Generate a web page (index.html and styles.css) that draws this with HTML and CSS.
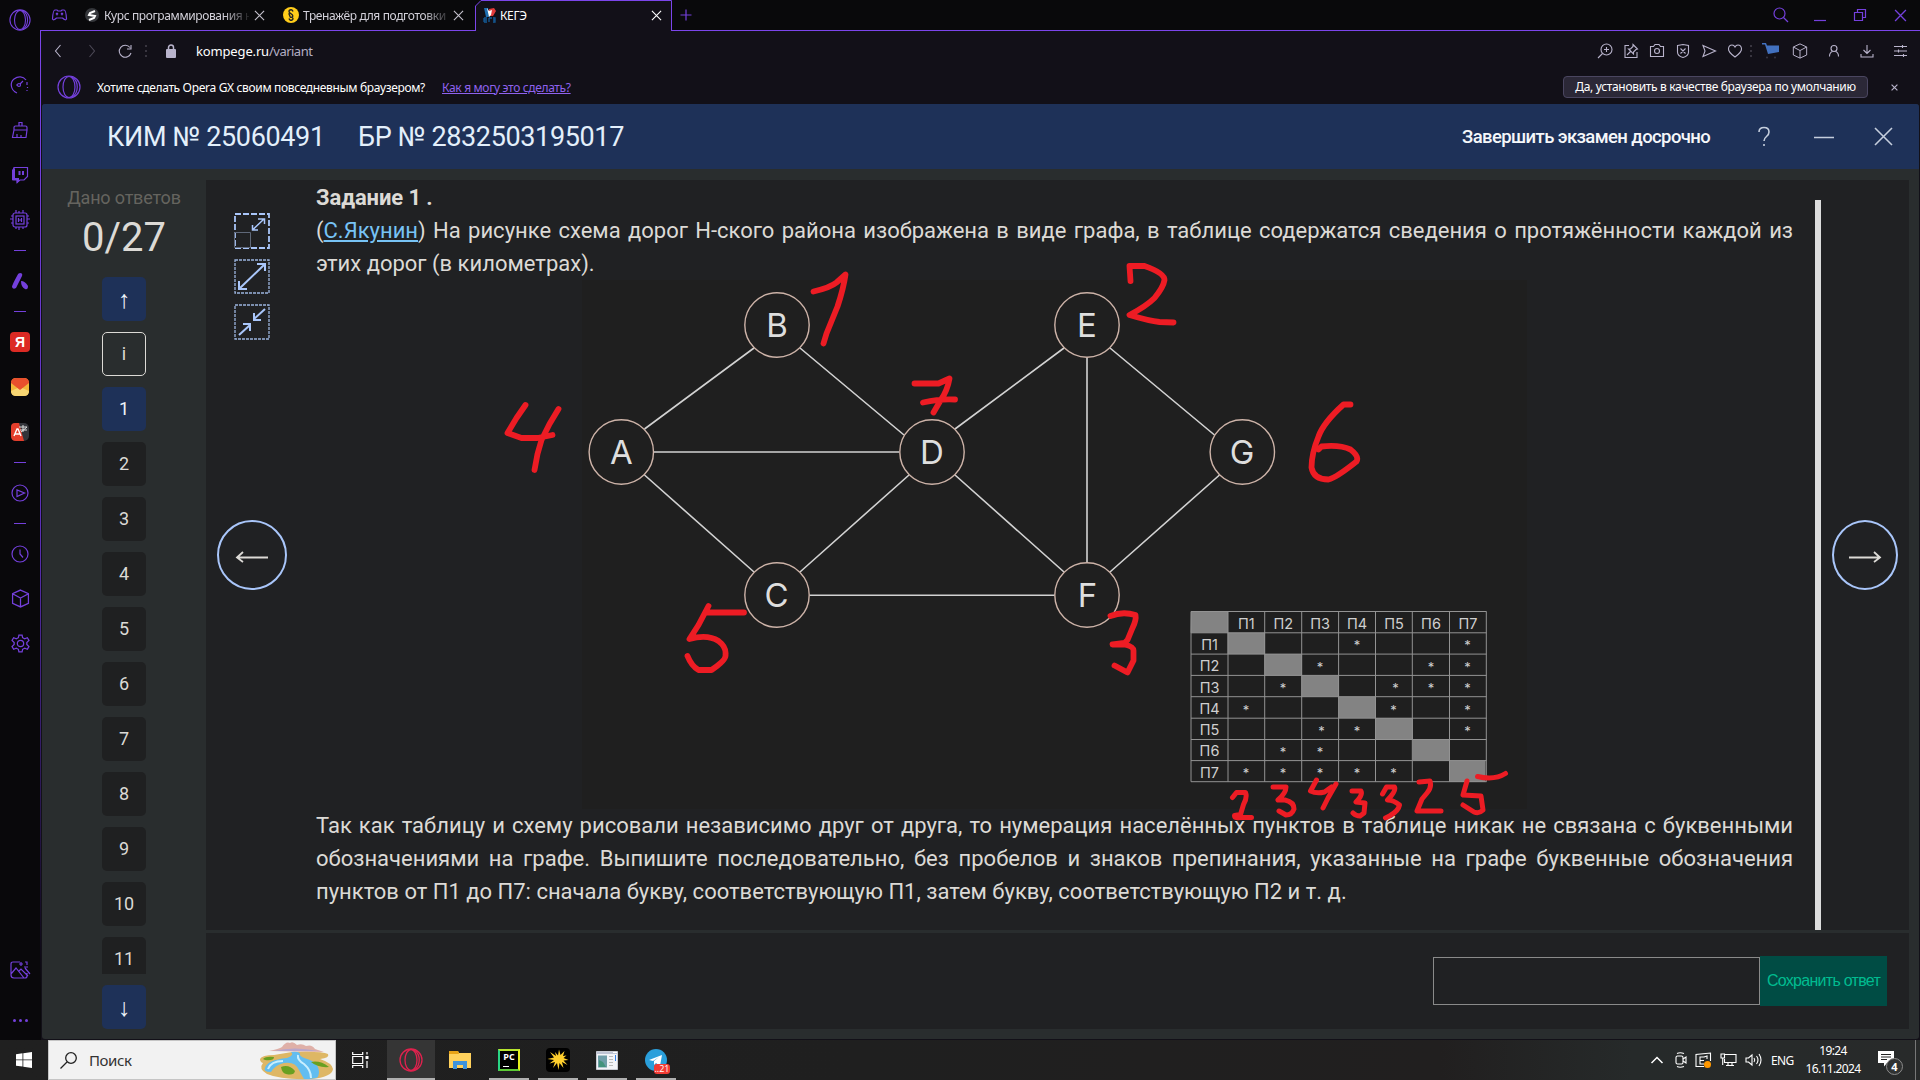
FILE: index.html
```html
<!DOCTYPE html>
<html lang="ru">
<head>
<meta charset="utf-8">
<title>КЕГЭ</title>
<link rel="stylesheet" href="styles.css">
</head>
<body>
<svg class="defs" width="0" height="0">
  <defs>
    <symbol id="opera" viewBox="0 0 24 24"><circle cx="12" cy="12" r="11"/><ellipse cx="12" cy="12" rx="6" ry="10.5"/><path d="M15 2c7 4 7 16 0 20"/></symbol>
    <symbol id="cube" viewBox="0 0 18 18"><path d="M9 1l7.5 3.5v9L9 17l-7.500-3.500v-9zM1.500 4.500L9 8.500l7.500-4M9 8.500V17"/></symbol>
    <symbol id="cross" viewBox="0 0 12 12"><path d="M1 1l10 10M11 1L1 11"/></symbol>
  </defs>
</svg>
<div class="screen">
  <div class="window">
    <aside class="rail">
      <div class="slot logo"><svg class="ic" width="22" height="22"><use href="#opera"/></svg></div>
      <div class="slot"><svg class="ic" width="20" height="18" viewBox="0 0 20 18"><path d="M7 17C0 14 0 6 4 3c4-3 9-3 12 1M17 6v3M17.500 11v1M17 14v1"/><circle cx="9" cy="9" r="1.500"/><path d="M10 8l3-3M6 9h1"/></svg></div>
      <div class="slot"><svg class="ic" width="18" height="18" viewBox="0 0 18 18"><path d="M8 5V1.500h3V5M3 9V6.500q0-1.500 1.500-1.500h10q1.500 0 1.500 1.500V9zM3 9L1.500 16.500H15L16 9M6 16v-3M10 16v-2"/></svg></div>
      <div class="slot"><svg class="ic" width="18" height="18" viewBox="0 0 18 18"><path d="M3 1.500h13.500v9L13 14H9l-3 2.500V14H2V4z"/><path class="solid" d="M1 4l3-2v10h4v3l-2 2.500V14H1z"/><path d="M8.500 5v4M12 5v4" stroke-width="2"/></svg></div>
      <div class="slot"><svg class="ic" width="20" height="20" viewBox="0 0 20 20"><rect x="3" y="3" width="14" height="14" rx="2"/><rect x="6" y="6" width="8" height="8"/><path d="M8.500 8v4M11.500 8v4M8.500 10h3M6 3V0M9 3V1M13 3V0M6 17v2M9 17v3M13 17v2M3 6H1M3 9H0M3 13H1M17 6h2M17 9h3M17 13h2"/></svg></div>
      <div class="dash"></div>
      <div class="slot"><svg class="ic" width="18" height="18" viewBox="0 0 18 18"><path class="solid" d="M9 1q3 0 2 3L5 16q-3 2-4-1Q1 13 6 4 7 1 9 1zM10 9q4 0 7 5 0 4-3 3Q10 15 10 9z"/></svg></div>
      <div class="dash"></div>
      <div class="slot"><span class="ya">Я</span></div>
      <div class="slot"><svg width="18" height="18" viewBox="0 0 18 18"><rect width="18" height="18" rx="5" fill="#f0b73a"/><path d="M0 13L9 9l9 4q0 5-5 5H5q-5 0-5-5z" fill="#f7d673"/><path d="M0 5q0-5 5-5h8q5 0 5 5l-9 7z" fill="#e8502d"/></svg></div>
      <div class="slot"><svg width="18" height="18" viewBox="0 0 18 18"><rect width="18" height="18" rx="5" fill="#33343a"/><path d="M4 0h4l5 18H5q-5 0-5-5V4q0-4 4-4z" fill="#e43e2c"/><path d="M3 13L6 6h1l3 7M4 11h5" fill="none" stroke="#fff" stroke-width="1.400"/><path d="M8 4h8M12 2v7M9 7h7M10 9l6-5" fill="none" stroke="#ddd"/></svg></div>
      <div class="dash"></div>
      <div class="slot"><svg class="ic" width="18" height="18" viewBox="0 0 18 18"><circle cx="9" cy="9" r="8"/><path d="M6 6v6.500L13.500 9z"/></svg></div>
      <div class="dash"></div>
      <div class="slot"><svg class="ic" width="18" height="18" viewBox="0 0 18 18"><circle cx="9" cy="9" r="8"/><path d="M9 4.500V9l3 3.500"/></svg></div>
      <div class="slot"><svg class="ic" width="19" height="19"><use href="#cube"/></svg></div>
      <div class="slot"><svg class="ic" width="19" height="19" viewBox="0 0 18 18"><circle cx="9" cy="9" r="3"/><path d="M7.500 1h3l.5 2.500 2 1 2.500-1 1.500 2.500L15 8v2l2 2-1.500 2.500-2.500-1-2 1-.5 2.500h-3L7 14.500l-2-1-2.500 1L1 12l2-2V8L1 6l1.500-2.500 2.500 1 2-1z"/></svg></div>
      <div class="slot gallery"><svg class="ic" width="20" height="18" viewBox="0 0 20 18"><path d="M10 1H3Q1 1 1 3v11q0 3 3 3h11q2 0 2-2v-3M1 13l5-6 8 10M9 10l2-2 7 7M15 7l5 6M11 1v4M9 3h4M15 1h2v3M18 6h-4"/></svg></div>
      <div class="slot more"><i></i><i></i><i></i></div>
    </aside>
    <div class="browser">
      <div class="tabs">
        <svg class="ic pad" width="15" height="12" viewBox="0 0 15 12"><path d="M3 1h2l1 1h3l1-1h2q2 0 2.500 9-1 2-4-1H4.500q-3 3-4 1Q1 1 3 1zM4 4l2 2M6 4L4 6M9 4l2 2M11 4L9 6"/></svg>
        <div class="tab t1">
          <svg width="14" height="14" viewBox="0 0 14 14"><circle cx="7" cy="7" r="7" fill="#35373b"/><path d="M10 3L5 5l-1 2 6 1-1 2-5 2" fill="none" stroke="#fff" stroke-width="2"/></svg>
          <span class="label">Курс программирования н</span>
          <svg class="x" width="11" height="11"><use href="#cross"/></svg>
        </div>
        <div class="tab t2">
          <svg width="16" height="16" viewBox="0 0 16 16"><circle cx="8" cy="8" r="8" fill="#ffcc1a"/><path d="M10 4.500Q9 2 7 3T7 6l2 1.500q1.500 1.500 0 2.500T7 9.500L6.500 8q-1-1.500.5-2.500M6 11.500q1 2.500 3 1.500t0-3" fill="none" stroke="#222" stroke-width="1.400"/></svg>
          <span class="label">Тренажёр для подготовки</span>
          <svg class="x" width="11" height="11"><use href="#cross"/></svg>
        </div>
        <div class="tab active">
          <svg class="edge" width="197" height="31" viewBox="0 0 197 31"><path d="M.5 31V6L6 .500h190.500V31" fill="#121018" stroke="#7b45ea"/></svg>
          <svg class="fav" width="13" height="16" viewBox="0 0 13 16"><path d="M1 1h4l1 9H3z" fill="#1f6fb2"/><path d="M6 2l5-1 2 3-3 5H6z" fill="#e23b3b"/><path d="M4 1l2 3 3-1-1 5-2 2z" fill="#fff"/><path d="M1 11h3M1 13h3M1 15h3M1 11v4M6 11v4M6 11h3M10 11h2v4h-2M10 13h2" fill="none" stroke="#145a96" stroke-width="1.300"/></svg>
          <span class="label">КЕГЭ</span>
          <svg class="x" width="11" height="11"><use href="#cross"/></svg>
        </div>
        <svg class="ic plus" width="12" height="12" viewBox="0 0 12 12"><path d="M6 .500v11M.5 6h11"/></svg>
        <div class="winctl">
          <svg class="ic" width="16" height="16" viewBox="0 0 16 16"><circle cx="6.500" cy="6.500" r="5.500"/><path d="M10.500 10.500L15 15"/></svg>
          <svg class="ic" width="12" height="14" viewBox="0 0 12 14"><path d="M0 12.500h12"/></svg>
          <svg class="ic" width="14" height="14" viewBox="0 0 14 14"><path d="M1.500 4.500h8v8h-8zM4.500 4V1.500h8v8H10"/></svg>
          <svg class="ic" width="13" height="13"><use href="#cross"/></svg>
        </div>
      </div>
      <div class="address">
        <svg class="g" width="8" height="14" viewBox="0 0 8 14"><path d="M6.500 1L1.500 7l5 6"/></svg>
        <svg class="g dim" width="8" height="14" viewBox="0 0 8 14"><path d="M1.500 1l5 6-5 6"/></svg>
        <svg class="g" width="14" height="14" viewBox="0 0 14 14"><path d="M12 3.500A6 6 0 1 0 13 9M13 1v4H9"/></svg>
        <span class="sep"></span>
        <svg class="lock" width="10" height="14" viewBox="0 0 10 14"><rect y="5" width="10" height="9" rx="1" fill="#b9b4cc"/><path d="M2.500 6V3.500a2.500 2.500 0 0 1 5 0V6" fill="none" stroke="#b9b4cc" stroke-width="1.500"/></svg>
        <span class="url"><b>kompege.ru</b>/variant</span>
        <div class="acts">
          <svg class="g" width="20" height="16" viewBox="0 0 20 16"><circle cx="11.500" cy="6.500" r="5.500"/><path d="M7.500 10.500L3 15M11.500 4v5M9 6.500h5"/></svg>
          <svg class="g" width="20" height="16" viewBox="0 0 20 16"><path d="M8 2.500H4v12h12V9M12 1.500l4.500 4.500-1.500.500L12.500 9v2L7.500 6h2L12 3.500zM9.500 8.500L6 12"/></svg>
          <svg class="g" width="20" height="16" viewBox="0 0 20 16"><path d="M3.500 3.500h3L8 1.500h4l1.500 2h3v10h-13z"/><circle cx="10" cy="8" r="2.500"/></svg>
          <svg class="g" width="20" height="16" viewBox="0 0 20 16"><path d="M4.500 2.500L10 1.500l5.500 1V9q0 4-5.500 5.500Q4.500 13 4.500 9zM7.500 5.500l5 5M12.500 5.500l-5 5"/></svg>
          <svg class="g" width="20" height="16" viewBox="0 0 20 16"><path d="M4 2.500L16.500 8 4 13.500 6 8z"/></svg>
          <svg class="g" width="20" height="16" viewBox="0 0 20 16"><path d="M10 14Q3 9 3.500 5.500 4 2 7 2q2 0 3 2 1-2 3-2 3 0 3.500 3.500Q17 9 10 14z"/></svg>
          <span class="sep s2"></span>
          <svg class="cart" width="17" height="16" viewBox="0 0 17 16"><path d="M0 0h4l1 2.500h12V9L6 11 3 1.500H0z" fill="#4271bf"/><circle cx="5" cy="14.500" r="1" fill="#383540"/><circle cx="13" cy="14.500" r="1" fill="#383540"/></svg>
          <svg class="g cb" width="16" height="16"><use href="#cube"/></svg>
          <svg class="g ps" width="12" height="14" viewBox="0 0 12 14"><circle cx="6" cy="4.500" r="3"/><path d="M1.500 12.500q0-4 3-5M10.500 12.500q0-4-3-5"/></svg>
          <svg class="g dl" width="14" height="14" viewBox="0 0 14 14"><path d="M7 1v8M3.500 6L7 9.500 10.500 6M1 10v3h12v-3"/></svg>
          <svg class="g sl" width="13" height="12" viewBox="0 0 13 12"><path d="M0 1.500h13M0 6h13M0 10.500h13M8.500 0v3M4.500 4.500v3M9.500 9v3"/></svg>
        </div>
      </div>
      <div class="infobar">
        <svg class="ic" width="24" height="24"><use href="#opera"/></svg>
        <span class="ask">Хотите сделать Opera GX своим повседневным браузером?</span>
        <a class="how">Как я могу это сделать?</a>
        <span class="yes">Да, установить в качестве браузера по умолчанию</span>
        <svg class="g close" width="7" height="7"><use href="#cross"/></svg>
      </div>
      <div class="page">
        <header class="head">
          <span class="kim">КИМ № 25060491</span>
          <span class="br">БР № 2832503195017</span>
          <span class="finish">Завершить экзамен досрочно</span>
          <svg class="h q" width="12" height="19" viewBox="0 0 12 19"><path d="M1 5q0-4.500 5-4.500t5 4.500q0 2.500-2.500 4.500T6 14M6 17v2"/></svg>
          <svg class="h m" width="20" height="4" viewBox="0 0 20 4"><path d="M0 2.500h20"/></svg>
          <svg class="h c" width="19" height="19" viewBox="0 0 19 19"><path d="M1 1l17 17M18 1L1 18"/></svg>
        </header>
        <div class="body">
          <nav class="nav">
            <div class="given">Дано ответов</div>
            <div class="count">0/27</div>
            <div class="nb blue arrow">↑</div>
            <div class="list">
              <div class="nb info">i</div><div class="nb blue">1</div><div class="nb">2</div><div class="nb">3</div><div class="nb">4</div><div class="nb">5</div><div class="nb">6</div><div class="nb">7</div><div class="nb">8</div><div class="nb">9</div><div class="nb">10</div><div class="nb">11</div>
            </div>
            <div class="nb blue arrow">↓</div>
          </nav>
          <main class="main">
            <section class="panel">
              <div class="tools">
                <svg class="t" width="36" height="36" viewBox="0 0 36 36"><path class="d1" d="M1 1h34v34H1z"/><path class="box" d="M.500 19.500h16v15H.5z"/><path d="M18.500 17L30 6M24 6h6.500v5M18.500 12v5H24"/></svg>
                <svg class="t" width="36" height="35" viewBox="0 0 36 35"><path class="d2" d="M1 1h34v33H1z"/><path class="w" d="M5 30L31 5M23 5h8v7M5 22v8h8"/></svg>
                <svg class="t" width="36" height="36" viewBox="0 0 36 36"><path class="d2" d="M1 1h34v34H1z"/><path class="w" d="M5 31l11-10M9 20h7v7M31 5L20 15M20 9v7h7"/></svg>
                <div class="round prev"><svg width="32" height="12" viewBox="0 0 32 12"><path d="M1 6.500h31M7 1L1 6.500 7 11"/></svg></div>
              </div>
              <article class="task">
                <h1>Задание 1 .</h1>
                <p><span class="ln full">(<a>С.Якунин</a>) На рисунке схема дорог Н-ского района изображена в виде графа, в таблице содержатся сведения о протяжённости каждой из</span><span class="ln">этих дорог (в километрах).</span></p>
                <svg class="graph" width="1476" height="529" viewBox="316 280 1476 529">
                  <rect x="582" y="280" width="945" height="529" fill="#1f1f1f"/>
                  <g class="edges">
                    <path d="M644.500 429L754 348M800 348l104 87M654 452h245M644.500 475L754 572M909 475l-109 97M955 429l109-81M1110 348l104.500 87M955 475l109 97M1219.500 475L1110 572M1087 357.500v205M809.500 595.200h245"/>
                  </g>
                  <g class="nodes"><circle cx="621.300" cy="452" r="32.200"/><circle cx="777" cy="325" r="32.200"/><circle cx="777" cy="595" r="32.200"/><circle cx="932" cy="452" r="32.200"/><circle cx="1087" cy="325" r="32.200"/><circle cx="1087" cy="595" r="32.200"/><circle cx="1242.300" cy="452" r="32.200"/></g>
                  <g class="names"><text x="621.300" y="464">A</text><text x="777" y="337">B</text><text x="776.500" y="607">C</text><text x="932" y="464">D</text><text x="1087" y="337">E</text><text x="1087.500" y="607">F</text><text x="1242" y="464">G</text></g>
                  <path fill="#838383" d="M1191 611.500h37v21.300h37v21.300h37v21.300h37v21.300h37v21.300h37v21.300h37v21.300h35.500v21.300H1449.500v-21.300h-37v-21.300h-37v-21.300h-37v-21.300h-37v-21.300h-37v-21.300h-37v-21.300h-37z"/>
                  <path class="rules" d="M1191 611.500h295.500M1191 632.800h295.500M1191 654.100h295.500M1191 675.400h295.500M1191 696.700h295.500M1191 718.200h295.500M1191 739.500h295.500M1191 760.600h295.500M1191 781.700h295.500M1191 611.500v170.200M1228 611.500v170.200M1264.700 611.500v170.200M1301.700 611.500v170.200M1338.600 611.500v170.200M1375.500 611.500v170.200M1412.300 611.500v170.200M1449.500 611.500v170.200M1486.300 611.500v170.200"/>
                  <g class="hd"><text x="1246.300" y="628.500">П1</text><text x="1283.200" y="628.500">П2</text><text x="1320.200" y="628.500">П3</text><text x="1357" y="628.500">П4</text><text x="1394" y="628.500">П5</text><text x="1431" y="628.500">П6</text><text x="1468" y="628.500">П7</text><text x="1209.500" y="650.300">П1</text><text x="1209.500" y="671.300">П2</text><text x="1209.500" y="692.500">П3</text><text x="1209.500" y="713.700">П4</text><text x="1209.500" y="734.800">П5</text><text x="1209.500" y="756">П6</text><text x="1209.500" y="777.700">П7</text></g>
                  <g class="st"><text x="1357" y="650">*</text><text x="1467.500" y="650">*</text><text x="1320" y="672">*</text><text x="1431" y="672">*</text><text x="1467.500" y="672">*</text><text x="1283" y="693">*</text><text x="1395.500" y="693">*</text><text x="1431" y="693">*</text><text x="1467.500" y="693">*</text><text x="1246" y="714.500">*</text><text x="1393.500" y="714.500">*</text><text x="1467.500" y="714.500">*</text><text x="1321.500" y="735.500">*</text><text x="1357" y="735.500">*</text><text x="1467.500" y="735.500">*</text><text x="1283" y="756.500">*</text><text x="1320" y="756.500">*</text><text x="1246" y="778">*</text><text x="1283" y="778">*</text><text x="1320" y="778">*</text><text x="1357" y="778">*</text><text x="1393.500" y="778">*</text></g>
                </svg>
                <p><span class="ln full">Так как таблицу и схему рисовали независимо друг от друга, то нумерация населённых пунктов в таблице никак не связана с буквенными</span><span class="ln full">обозначениями на графе. Выпишите последовательно, без пробелов и знаков препинания, указанные на графе буквенные обозначения</span><span class="ln">пунктов от П1 до П7: сначала букву, соответствующую П1, затем букву, соответствующую П2 и т. д.</span></p>
              </article>
              <div class="scroll"></div>
              <div class="right"><div class="round"><svg width="32" height="12" viewBox="0 0 32 12"><path d="M0 6.500h31M25 1l6 5.500L25 11"/></svg></div></div>
            </section>
            <section class="answer">
              <div class="input"></div>
              <div class="save">Сохранить ответ</div>
            </section>
          </main>
        </div>
      </div>
    </div>
  </div>
  <footer class="taskbar">
    <div class="start"><svg width="16" height="16" viewBox="0 0 16 16"><path fill="#fff" d="M0 2.200L6.500 1.300v6.200H0zM7.300 1.200L16 0v7.500H7.300zM0 8.300h6.500v6.300L0 13.800zM7.300 8.300H16V16l-8.700-1.200z"/></svg></div>
    <div class="search">
      <svg width="17" height="17" viewBox="0 0 17 17"><circle cx="11" cy="6" r="5.300" fill="none" stroke="#222" stroke-width="1.300"/><path d="M7 10L.500 16.500" stroke="#222" stroke-width="1.300"/></svg>
      <span>Поиск</span>
      <svg class="river" width="74" height="38" viewBox="0 0 74 38"><path d="M9 10q10-2 13-4 4-6 8-4 3-2 7 2 5-2 9 1 6-2 9 3l9 3z" fill="#dfb0a8"/><path d="M14 10q20-5 44 0z" fill="#b8a6cc"/><path d="M0 18q2-4 14-4l18-3q30-1 36 2 2 4-8 5 12 4 13 10-1 8-22 10-30 1-44-5-9-5-4-11-3-1-3-4z" fill="#deb765"/><path d="M31 11q10-1 9 3 0 2 10 5 12 6 8 17-3 2-14 2-3-5-5-9-4-9-15-7-9 2-13 9-8 0-6-4 2-8 22-10 8-3 4-6z" fill="#62bdf0"/><path d="M38 14q-1 5 6 9 7 6 7 14M8 28q3-8 15-8" fill="none" stroke="#c9efff" stroke-width="2"/><path d="M3 18q3-3 11-2 0 4-9 3zM51 21q9-2 18 5-11 1-18-5zM21 26q8-3 14 4-1 5-9 3-4-1-5-7z" fill="#68a021"/></svg>
    </div>
    <div class="app view"><svg width="17" height="16" viewBox="0 0 17 16"><path d="M.7 0v2.500h10V0M.7 16v-2.500h10V16M.7 4.500h10v7H.7zM15 0v2.500M15 9v7" fill="none" stroke="#fff" stroke-width="1.200"/><path fill="#fff" d="M13.500 4h3v3h-3z"/></svg></div>
    <div class="app on cur"><svg class="redop" width="24" height="24"><use href="#opera"/></svg></div>
    <div class="app"><svg width="22" height="18" viewBox="0 0 22 18"><path d="M0 0h9l1 2h12v15H0z" fill="#ffd15c"/><path d="M0 0h9l1 3H0z" fill="#e8a317"/><path d="M4 18v-8h14v8h-4v-4H8v4z" fill="#3d93dc"/></svg></div>
    <div class="app on"><span class="pc">PC<i></i></span></div>
    <div class="app on"><svg width="24" height="24" viewBox="0 0 24 24"><rect width="24" height="24" rx="4" fill="#000"/><path fill="#ffcf2d" d="M12 7.500L13 1.500l1.500 5.500 4-4-1.500 5 3.500-.5-3 2.500 5 2-5 .5 4 4.500-5.500-3 1.500 6-4-5-1 7-1.500-7-4 5 2-6-5.500 1.500 4.500-3.500-6.500-1 6.500-1.500L4 4l6 4-1-4z"/></svg></div>
    <div class="app on"><svg width="22" height="19" viewBox="0 0 22 19"><path fill="#f3f4f8" stroke="#c8cbd3" d="M.500.500h21v18H.500z"/><path fill="#bfc4d4" d="M1 1h20v2H1z"/><path fill="#fff" d="M17 1h4v1h-4z"/><path fill="#6f9ea9" d="M2 4.500h9v12H2z"/><path fill="#43937c" d="M3 9l4 2 3 5H3z"/><path stroke="#bbb" d="M13 5.500h4M13 8.500h4M13 11.500h4M13 14.500h4"/><path stroke="#3482e8" d="M19.500 4v6"/></svg></div>
    <div class="app on tg"><svg width="22" height="22" viewBox="0 0 22 22"><circle cx="11" cy="11" r="11" fill="#2a9fdb"/><path fill="#fff" d="M4 11l13-5-2 11-4-3-2 2v-4l5-4-6 4z"/></svg><b>..21</b></div>
    <div class="tray">
      <svg width="12" height="8" viewBox="0 0 12 8"><path d="M.500 7L6 1.500 11.500 7" stroke-width="1.500"/></svg>
      <svg width="12" height="16" viewBox="0 0 12 16"><rect x="1" y="4" width="7" height="8" rx="1.500"/><path d="M8 7l3-2v6L8 9M2 1.500q3-1.500 7 0M2 14.500q3 1.500 7 0"/></svg>
      <svg width="17" height="16" viewBox="0 0 17 16"><path d="M9 14.500H1v-12L15.500 1v8M9 5H5v7h4M5 8.500h4M9 5l3-1v3"/><circle cx="12.500" cy="12.500" r="3.500" fill="#ff9800" stroke="none"/></svg>
      <svg width="17" height="14" viewBox="0 0 17 14"><path d="M5 1.500h11v8H4.500V6M8 9.500v3M12 9.500v3M6 12.500h8M1 1h3.500v4H1zM2.700 5v7"/></svg>
      <svg width="17" height="14" viewBox="0 0 17 14"><path d="M1 5h2.500L7 2v10L3.500 9H1zM9 5q1.500 2 0 4M11.500 3q3 4 0 8M14 1q4 6 0 12"/></svg>
      <span class="lang">ENG</span>
      <div class="clock"><span>19:24</span><span>16.11.2024</span></div>
      <div class="note"><svg width="16" height="16" viewBox="0 0 16 16"><path d="M0 0h16v12H9l-3 3.500V12H0z" fill="#fff" stroke="none"/><path d="M3 3.500h10M3 6h10M3 8.500h6" stroke="#222"/></svg><b>4</b></div>
    </div>
  </footer>
  <svg class="ink" width="1920" height="1080" viewBox="0 0 1920 1080">
    <path d="M813.500 291.500q17-4 23-9l9-8q-2 14-8 32l-11 27-3 10M525.500 405l-9 13-9 15 14 5h16l15-3M558.500 409l-9 15-8 16-4 14-3 16M708.500 606l-10 19-9 14q18-5 29 2 8 6 7 14 1 5-14 15h-13q-7-4-11-14M708 612.500h36M914.500 383.500h24l11-5q-2 12-9 22l-7 12M923 402.500q18-4 32-3M1130.500 281l-1-15h15q20 7 20 14-1 7-10 18-8 8-25 17 20 6 30 7l14 .500M1350.500 404.500h-7q-20 18-25 32-7 17-7 31 2 12 17 12 8-2 28-18 3-5-6-12-11-5-29-3l-3 3"/>
    <path d="M1110.500 616q12-5 25-1 1 5-3 13l-5 12-3 3-12 1.500 12 0q9 2 9 6v10l-6 12-13-7"/>
    <g stroke-width="5"><path d="M1232.500 797.500l4-5h9q2 5-2 12l-3 10-6 1q0 3 5 2h12M1273 787h13q0 6-8 13h7q9 2 9 9-2 6-8 6l-7-4M1316.500 780l-6 11q6 3 14 1l7-5M1336 784l-8 14-5 10M1352 791h9q2 4-5 11l9 1-1 10-4 3q-4 0-7-3M1382.500 794l4-7h8q2 4-7 13 6 0 12 5-1 6-10 11l-4 2M1419 782l11-1q2 6-3 12l-5 6-5 12h24M1467 781l-4 14 18 1 2 14q-4 4-9 2l-11-7M1477.500 776.500q17 4 28-3"/></g>
  </svg>
</div>
</body>
</html>
```
FILE: styles.css
```css
* { box-sizing: border-box; }
body { margin: 0; background: #09080b; font-family: "Noto Sans", "Open Sans", sans-serif; overflow: hidden; }
svg { display: block; flex: none; overflow: visible; }
.defs { position: absolute; }
.screen { width: 1920px; height: 1080px; position: relative; display: flex; flex-direction: column; }
.window { display: flex; height: 1040px; }
.ic { fill: none; stroke: #7440dc; stroke-width: 1.2; }
.ic .solid { fill: #7440dc; stroke: none; }
.g { fill: none; stroke: #b9b4cc; stroke-width: 1.1; }

.rail { width: 40px; display: flex; flex-direction: column; background: #09080b; }
.slot { height: 45px; display: flex; align-items: center; justify-content: center; flex: none; }
.slot.logo { height: 40px; margin-bottom: 22px; }
.dash { height: 16px; display: flex; align-items: center; justify-content: center; flex: none; }
.dash::before { content: ""; width: 12px; height: 1px; background: #7440dc; }
.slot.gallery { margin-top: auto; height: 50px; }
.slot.more { height: 40px; margin-top: 5px; gap: 3px; }
.more i { width: 3px; height: 3px; border-radius: 50%; background: #7440dc; }
.ya { width: 20px; height: 20px; border-radius: 4px; background: #dc2a24; color: #fff; font: bold 14px/20px "Liberation Sans", sans-serif; text-align: center; }

.browser { width: 1880px; display: flex; flex-direction: column; background: linear-gradient(#7b45ea, #5a2fb5 50%, #09080b 95%) 0 30px / 1px 1010px no-repeat, #121018; }
.tabs { height: 31px; display: flex; align-items: center; background: #09090b; border-bottom: 1px solid #7b45ea; font-size: 12px; color: #d3d1da; }
.pad { margin-left: 12px; }
.tab { display: flex; align-items: center; height: 31px; }
.tab .x { stroke: #c4c1cc; fill: none; stroke-width: 1.2; }
.label { white-space: nowrap; letter-spacing: -0.38px; }
.t1 { margin-left: 18px; }
.t1 .label { width: 145px; margin-left: 5px; margin-right: 5px; -webkit-mask: linear-gradient(90deg, #000 120px, transparent 148px); }
.t2 { margin-left: 18px; }
.t2 .label { width: 146px; margin-left: 4px; margin-right: 4px; -webkit-mask: linear-gradient(90deg, #000 120px, transparent 150px); }
.active { width: 197px; margin-left: 11px; position: relative; color: #fff; }
.active .edge { position: absolute; left: 0; top: 0; }
.active .fav { margin-left: 8px; position: relative; }
.active .label { margin-left: 4px; flex: 1; position: relative; }
.active .x { margin-right: 10px; position: relative; stroke: #fff; }
.plus { margin-left: 8px; }
.winctl { margin-left: auto; margin-right: 13px; display: flex; align-items: center; gap: 27px; }
.winctl svg:first-child { margin-right: -2px; }

.address { height: 39px; display: flex; align-items: center; padding-left: 14px; }
.dim { opacity: .35; margin-left: 26px; }
.dim + .g { margin-left: 22px; }
.sep { width: 2px; height: 12px; margin-left: 13px; background: repeating-linear-gradient(#38353f 0 2px, transparent 2px 5px); }
.lock { margin-left: 19px; }
.url { margin-left: 20px; font-size: 13px; letter-spacing: -0.5px; color: #b4afc4; width: 130px; letter-spacing: -0.5px; }
.url { letter-spacing: -0.52px; }
.url b { font-weight: 400; color: #fff; letter-spacing: -0.15px; }
.acts { margin-left: auto; display: flex; align-items: center; gap: 6px; margin-right: 13px; }
.acts > :first-child { margin-left: 0; }
.acts .s2 { margin-left: -1px; }
.cart { margin-left: 4px; }
.cb { margin-left: 7px; }
.ps { margin-left: 14px; }
.dl { margin-left: 14px; }
.sl { margin-left: 14px; }

.infobar { height: 34px; display: flex; align-items: center; padding-left: 17px; font-size: 12px; color: #fff; }
.ask { margin-left: 16px; width: 345px; letter-spacing: -0.34px; white-space: nowrap; }
.how { color: #8f62ee; text-decoration: underline; letter-spacing: -0.35px; white-space: nowrap; }
.yes { margin-left: auto; width: 305px; height: 22px; border: 1px solid #4a4660; border-radius: 4px; background: #2b2837; text-align: center; line-height: 19px; letter-spacing: -0.33px; white-space: nowrap; }
.close { margin: 0 22px 0 23px; stroke-width: 2; }

.page { margin-left: 2px; width: 1877px; height: 935px; border-radius: 3px; overflow: hidden; background: #292d2e; font-family: Roboto, sans-serif; display: flex; flex-direction: column; }
.head { height: 65px; background: #1e3158; display: flex; align-items: center; padding-left: 65px; color: #e3effb; font-size: 27px; letter-spacing: -0.36px; white-space: nowrap; }
.kim { width: 251px; }
.finish { margin-left: auto; font-size: 18.5px; font-weight: 500; letter-spacing: -0.6px; width: 250px; color: #f5f7fa; }
.h { fill: none; stroke: #c5cedd; stroke-width: 1.6; }
.q { margin-left: 46px; }
.m { margin-left: 44px; }
.c { margin: 0 26px 0 40px; }
.body { display: flex; height: 870px; }
.nav { width: 164px; display: flex; flex-direction: column; align-items: center; }
.given { margin-top: 17px; font-size: 18px; line-height: 24px; letter-spacing: -0.18px; color: #65645f; }
.count { font-size: 40px; line-height: 56px; height: 54px; color: #dcdad6; margin-bottom: 13px; }
.nb { width: 44px; height: 44px; border-radius: 5px; background: #1f2021; color: #dcdad6; font-size: 18px; line-height: 44px; text-align: center; flex: none; }
.blue { background: #1e3158; color: #eef3fa; }
.arrow { font-size: 25px; line-height: 45px; }
.info { border: 1px solid #dcdad6; background: none; line-height: 42px; }
.list { height: 642px; margin: 11px 0; display: flex; flex-direction: column; gap: 11px; overflow: hidden; }
.main { width: 1703px; margin-top: 11px; display: flex; flex-direction: column; gap: 3px; }
.panel { height: 750px; background: #202123; display: flex; }
.tools { width: 92px; padding-top: 33px; display: flex; flex-direction: column; align-items: center; gap: 10px; }
.t { fill: none; stroke: #a9c6fa; stroke-width: 1.5; }
.t .w { stroke-width: 2; }
.t .d1 { stroke-width: 1.8; stroke-dasharray: 6 2; }
.t .d2 { stroke-width: 1.3; stroke-dasharray: 3 1; stroke: #9bb4de; }
.t .box { stroke-width: 1; stroke: #5f6879; }
.round { width: 70px; height: 70px; border: 2px solid #a9c6fa; border-radius: 50%; display: flex; align-items: center; justify-content: center; padding-top: 4px; }
.round svg { fill: none; stroke: #dcdad6; stroke-width: 1.8; }
.prev { margin-top: 170px; }
.task { margin-left: 18px; width: 1477px; padding-top: 1px; color: #dcdad6; font-size: 22px; line-height: 33px; }
.task h1 { margin: 0; font-size: 22px; line-height: 33px; font-weight: 700; letter-spacing: -0.1px; }
.task p { margin: 0; }
.task a { color: #77c3f5; text-decoration: underline; }
.ln { display: block; white-space: nowrap; }
.full { white-space: normal; text-align: justify; text-align-last: justify; height: 33px; }
.graph { height: 529px; }
.edges path { stroke: #d2d2d2; stroke-width: 1.6; fill: none; }
.nodes { fill: none; stroke: #cdb3a8; stroke-width: 1.4; }
.names { font: 33px Inter, sans-serif; fill: #dedede; text-anchor: middle; }
.rules { stroke: #939393; stroke-width: 1; }
.hd { font: 14.5px Inter, sans-serif; fill: #cfcfcf; text-anchor: middle; }
.st { font: 13px Inter, sans-serif; fill: #cfcfcf; text-anchor: middle; }
.scroll { width: 6px; margin: 20px 0 0 22px; background: #dcdcdc; }
.right { flex: 1; display: flex; justify-content: center; padding-top: 340px; }
.right .round { width: 66px; }
.answer { height: 96px; background: #202123; display: flex; justify-content: flex-end; align-items: center; padding-right: 22px; }
.input { width: 327px; height: 48px; border: 1px solid #8a8a8a; }
.save { width: 127px; height: 50px; background: #004c44; color: #00bc90; font: 16px/50px "Liberation Sans", sans-serif; text-align: center; letter-spacing: -0.72px; white-space: nowrap; }

.taskbar { height: 40px; display: flex; background: linear-gradient(90deg, #202020, #1f1f1f 45%, #211f1f 75%, #262a2a 85%, #282a2a); color: #fff; }
.start { width: 48px; display: flex; align-items: center; justify-content: center; }
.search { width: 288px; background: #f2f2f2; border: 1px solid #c5c5c5; display: flex; align-items: center; padding-left: 11px; color: #333; font-size: 15px; }
.search span { margin-left: 12px; flex: 1; letter-spacing: -0.4px; }
.river { margin-right: 1px; }
.app { width: 48px; margin-right: 1px; display: flex; align-items: center; justify-content: center; position: relative; }
.view { margin-right: 3px; }
.on::after { content: ""; position: absolute; left: 4px; right: 4px; bottom: 0; height: 2px; background: #b0b0b0; }
.cur { background: #353535; }
.cur::after { left: 0; right: 0; }
.redop { fill: none; stroke: #e0224e; stroke-width: 1.3; }
.pc { width: 22px; height: 22px; background: #000; border: 2px solid; border-color: #b7e52f #e7ef1d #5dcb35 #29d585; font: bold 9px/11px "Open Sans", sans-serif; text-align: center; }
.pc i { display: block; width: 6px; height: 1px; margin: 4px 0 0 3px; background: #fff; }
.tg b { position: absolute; left: 22px; top: 24px; width: 16px; height: 10px; border-radius: 3px; background: #f23c34; font: 9px/10px "Open Sans", sans-serif; text-align: center; }
.tray { margin-left: auto; display: flex; align-items: center; margin-right: 4px; padding-right: 12px; border-right: 1px solid #777; gap: 8px; font-size: 12px; }
.tray svg { fill: none; stroke: #fff; stroke-width: 1.1; }
.tray svg:first-child { margin-right: 4px; }
.lang { margin-left: 1px; width: 24px; letter-spacing: -0.6px; }
.clock { width: 66px; margin-left: -3px; display: flex; flex-direction: column; align-items: center; line-height: 18px; letter-spacing: -0.65px; }
.note { position: relative; width: 25px; height: 24px; padding-top: 3px; margin-left: 4px; }
.note b { position: absolute; left: 8px; top: 10px; width: 17px; height: 17px; border: 1px solid #8b8b8b; border-radius: 50%; background: #303232; font: bold 11px/15px "Open Sans", sans-serif; text-align: center; }
.ink { position: absolute; left: 0; top: 0; fill: none; stroke: #ed1c24; stroke-width: 5.8; stroke-linecap: round; stroke-linejoin: round; pointer-events: none; }
```
